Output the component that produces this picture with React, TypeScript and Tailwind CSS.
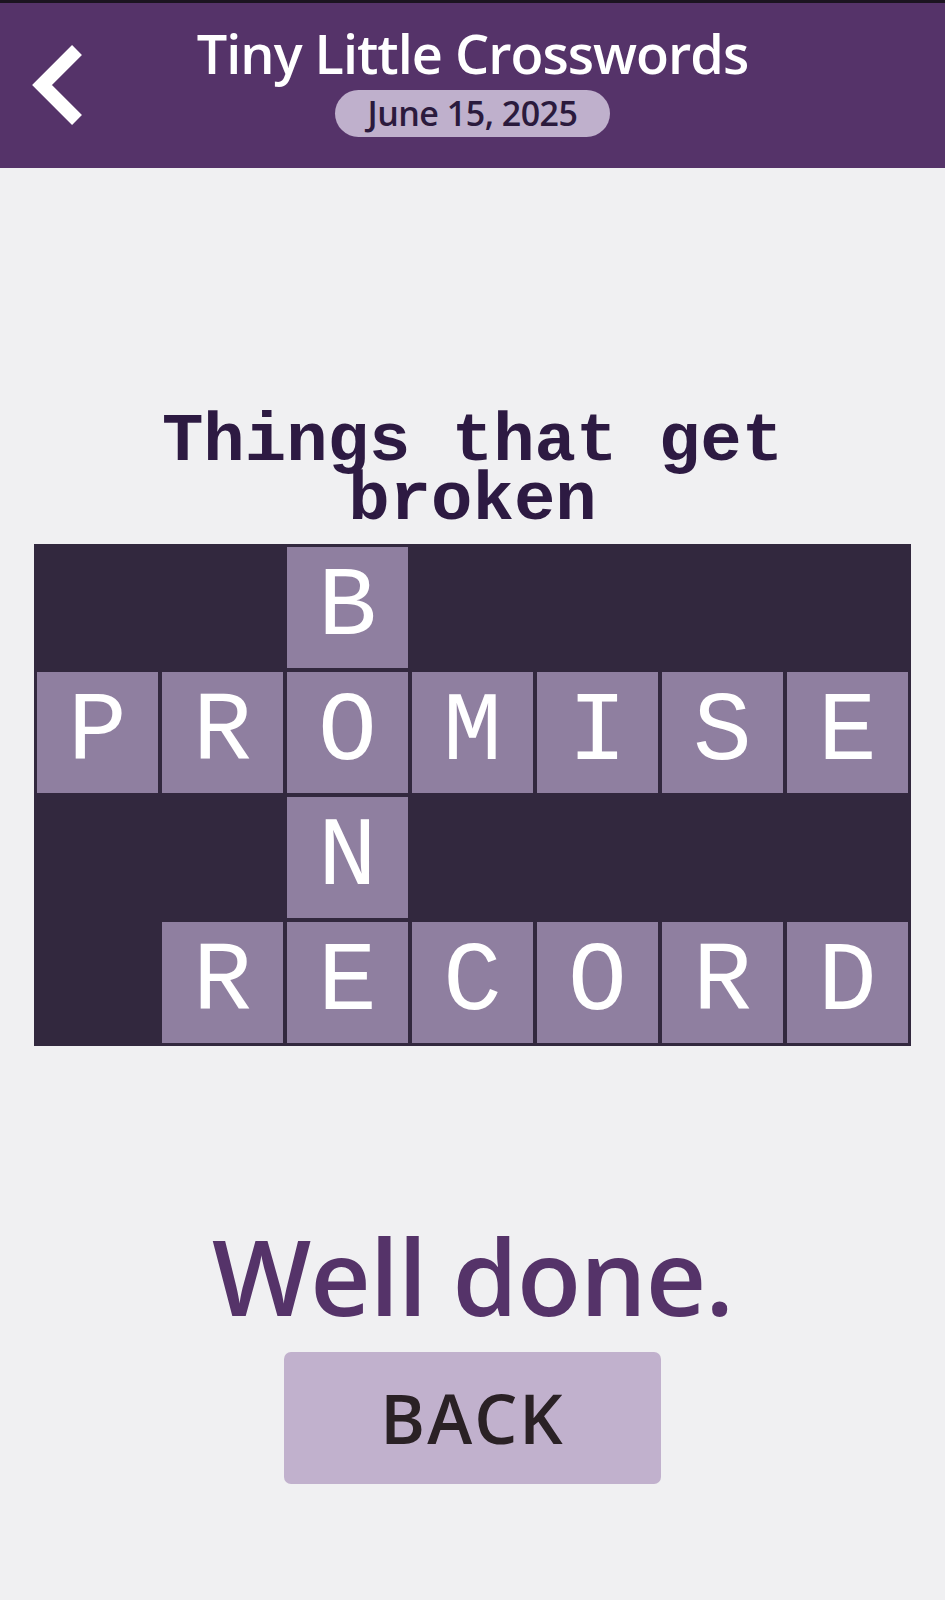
import React from "react";

const ROWS: string[] = ["__B____", "PROMISE", "__N____", "_RECORD"];

function Chevron() {
  return (
    <svg width="90" height="110" viewBox="20 30 90 110" className="block">
      <polyline
        points="77,50 42,85 77,120"
        fill="none"
        stroke="#ffffff"
        strokeWidth="14"
        strokeLinecap="butt"
        strokeLinejoin="miter"
      />
    </svg>
  );
}

export default function App() {
  const sans = { fontFamily: "'Open Sans', Lato, sans-serif" };
  const mono = { fontFamily: "'Liberation Mono', 'DejaVu Sans Mono', monospace" };
  return (
    <div className="min-h-[1600px] w-[945px] bg-[#f0f0f2] flex flex-col" style={sans}>
      <header className="h-[168px] border-t-[3px] border-[#1b1420] bg-[#553369] grid grid-cols-[110px_1fr_110px] items-start">
        <div className="pl-[20px] pt-[27px]">
          <Chevron />
        </div>
        <div className="flex flex-col items-center pt-[22px]">
          <h1 className="text-white text-[54px] leading-[56px] font-semibold tracking-[-1px]">Tiny Little Crosswords</h1>
          <div className="mt-[9px] h-[47px] w-[275px] rounded-full bg-[#bfb0cc] flex items-center justify-center text-[#2b1a3d] text-[34px] font-semibold tracking-[-0.5px]">
            June 15, 2025
          </div>
        </div>
        <div />
      </header>

      <main className="flex flex-col items-center">
        <p
          className="mt-[245px] w-[700px] text-center text-[#2d1a42] text-[69px] leading-[59px] font-bold"
          style={mono}
        >
          Things that get broken
        </p>

        <div className="mt-[13px] w-[877px] bg-[#32283e] p-[3px] grid grid-cols-7 gap-[4px]">
          {ROWS.flatMap((row, r) =>
            row.split("").map((ch, c) =>
              ch === "_" ? (
                <div key={`${r}-${c}`} className="h-[121px]" />
              ) : (
                <div
                  key={`${r}-${c}`}
                  className="h-[121px] bg-[#8f7fa0] flex items-center justify-center text-white text-[98px] leading-none"
                  style={mono}
                >
                  {ch}
                </div>
              )
            )
          )}
        </div>

        <h2 className="mt-[178px] text-[#553369] text-[105px] leading-[103px] font-semibold tracking-[-1px]">Well done.</h2>

        <button className="mt-[25px] w-[377px] h-[132px] rounded-[7px] bg-[#c1b1cd] text-[#2a2125] text-[68px] font-semibold tracking-[2px] flex items-center justify-center">
          BACK
        </button>
      </main>
    </div>
  );
}
